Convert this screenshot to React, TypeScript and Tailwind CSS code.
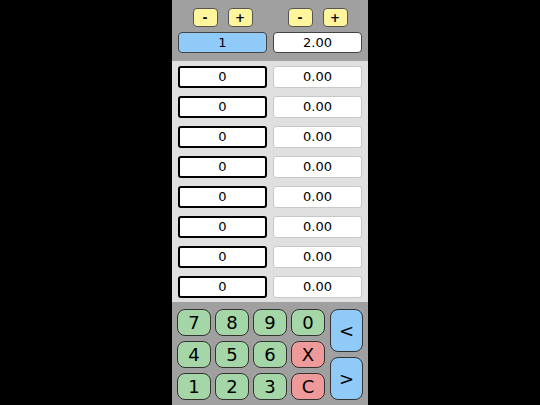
import React from "react";

const rows = Array.from({ length: 8 });

function Key({ label, color }: { label: string; color: string }) {
  return (
    <div
      className={`h-[27px] w-[34px] rounded-[8px] border border-[#333] ${color} flex items-center justify-center text-[18px] text-black`}
    >
      {label}
    </div>
  );
}

export default function App() {
  return (
    <div
      className="flex h-[405px] w-[540px] justify-center bg-black"
      style={{ fontFamily: '"DejaVu Sans", sans-serif' }}
    >
      <div className="flex w-[196px] flex-col bg-[#a0a0a0]">
        {/* top */}
        <div className="flex h-[61px] flex-col px-[6px] pt-[8px]">
          <div className="grid grid-cols-2 gap-[6px]">
            <div className="flex justify-center gap-[10px]">
              <div className="flex h-[19px] w-[25px] items-center justify-center rounded-[4px] border border-[#555] bg-[#fff59d] text-[12px] font-bold">-</div>
              <div className="flex h-[19px] w-[25px] items-center justify-center rounded-[4px] border border-[#555] bg-[#fff59d] text-[12px] font-bold">+</div>
            </div>
            <div className="flex justify-center gap-[10px]">
              <div className="flex h-[19px] w-[25px] items-center justify-center rounded-[4px] border border-[#555] bg-[#fff59d] text-[12px] font-bold">-</div>
              <div className="flex h-[19px] w-[25px] items-center justify-center rounded-[4px] border border-[#555] bg-[#fff59d] text-[12px] font-bold">+</div>
            </div>
          </div>
          <div className="mt-[5px] grid grid-cols-2 gap-[6px]">
            <div className="flex h-[21px] items-center justify-center rounded-[4px] border border-[#444] bg-[#90caf9] text-[13px]">1</div>
            <div className="flex h-[21px] items-center justify-center rounded-[4px] border border-[#444] bg-white text-[13px]">2.00</div>
          </div>
        </div>
        {/* rows */}
        <div className="flex h-[241px] flex-col gap-[8px] bg-[#e0e0e0] px-[6px] pt-[5px]">
          {rows.map((_, i) => (
            <div key={i} className="grid grid-cols-2 gap-[6px]">
              <div className="flex h-[22px] items-center justify-center rounded-[3px] border-2 border-black bg-white text-[13px]">0</div>
              <div className="flex h-[22px] items-center justify-center rounded-[3px] border border-[#c8c8c8] bg-white text-[13px]">0.00</div>
            </div>
          ))}
        </div>
        {/* keypad */}
        <div className="flex gap-[5px] px-[5px] pt-[7px]">
          <div className="grid grid-cols-4 gap-x-[4px] gap-y-[5px]">
            <Key label="7" color="bg-[#a5d6a7]" />
            <Key label="8" color="bg-[#a5d6a7]" />
            <Key label="9" color="bg-[#a5d6a7]" />
            <Key label="0" color="bg-[#a5d6a7]" />
            <Key label="4" color="bg-[#a5d6a7]" />
            <Key label="5" color="bg-[#a5d6a7]" />
            <Key label="6" color="bg-[#a5d6a7]" />
            <Key label="X" color="bg-[#ef9a9a]" />
            <Key label="1" color="bg-[#a5d6a7]" />
            <Key label="2" color="bg-[#a5d6a7]" />
            <Key label="3" color="bg-[#a5d6a7]" />
            <Key label="C" color="bg-[#ef9a9a]" />
          </div>
          <div className="flex flex-col gap-[5px]">
            <div className="flex h-[43px] w-[33px] items-center justify-center rounded-[8px] border border-[#333] bg-[#90caf9] text-[18px]">&lt;</div>
            <div className="flex h-[43px] w-[33px] items-center justify-center rounded-[8px] border border-[#333] bg-[#90caf9] text-[18px]">&gt;</div>
          </div>
        </div>
      </div>
    </div>
  );
}
